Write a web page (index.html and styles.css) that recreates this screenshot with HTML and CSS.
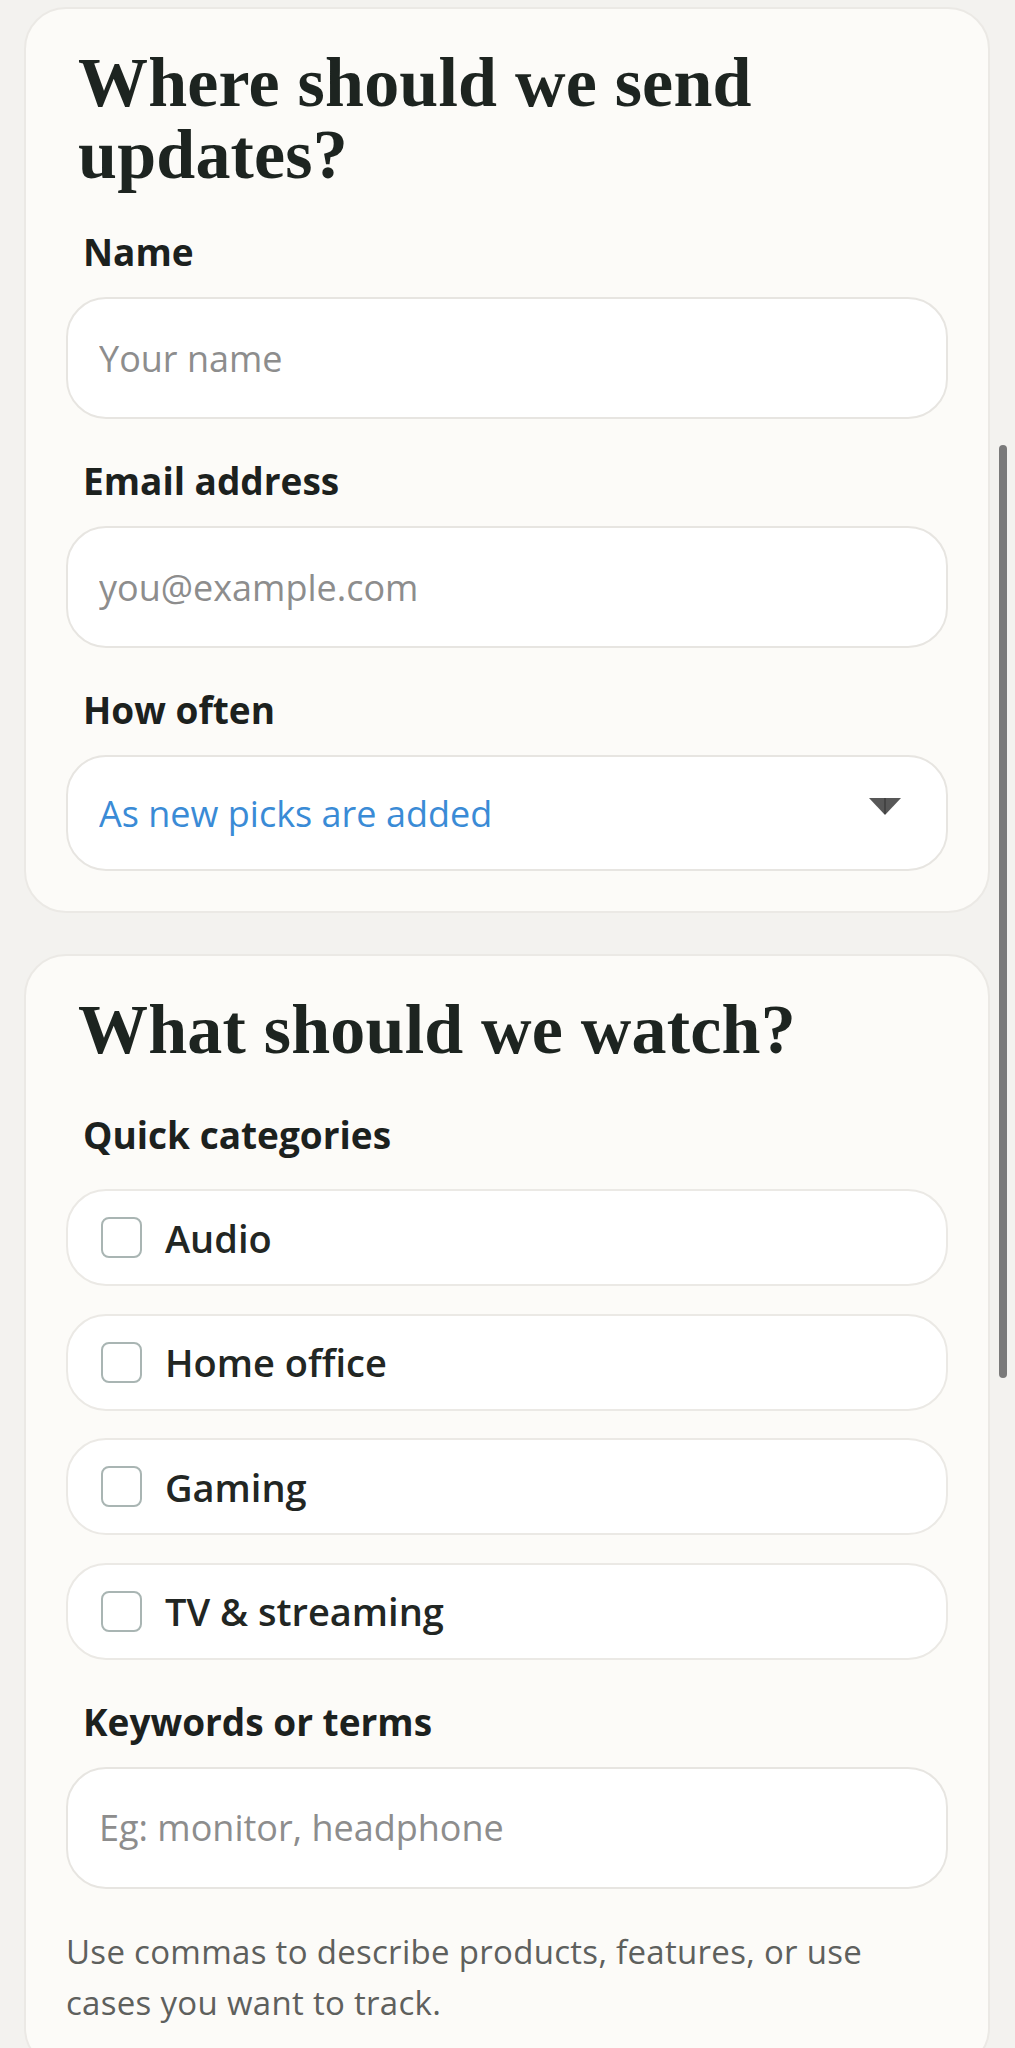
FILE: index.html
```html
<!DOCTYPE html>
<html lang="en">
<head>
<meta charset="utf-8">
<title>Alerts</title>
<link rel="stylesheet" href="styles.css">
</head>
<body>
<main class="page">
  <section class="card">
    <h2 class="card-title">Where should we send updates?</h2>
    <div class="field">
      <label class="field-label" for="name">Name</label>
      <input class="text-input" id="name" type="text" placeholder="Your name">
    </div>
    <div class="field">
      <label class="field-label" for="email">Email address</label>
      <input class="text-input" id="email" type="email" placeholder="you@example.com">
    </div>
    <div class="field">
      <label class="field-label" for="freq">How often</label>
      <div class="select-wrap">
        <select class="select" id="freq">
          <option>As new picks are added</option>
          <option>Daily digest</option>
          <option>Weekly digest</option>
        </select>
        <svg class="select-arrow" width="32" height="17" viewBox="0 0 32 17" aria-hidden="true">
          <polygon points="0,0 32,0 16,17" fill="#575757"/>
          <line x1="16" y1="0" x2="16" y2="16" stroke="#3c3c3c" stroke-width="1.5"/>
        </svg>
      </div>
    </div>
  </section>

  <section class="card">
    <h2 class="card-title card-title--watch">What should we watch?</h2>
    <div class="field field--categories">
      <span class="field-label">Quick categories</span>
      <div class="category-list">
        <label class="category"><input class="checkbox" type="checkbox"><span>Audio</span></label>
        <label class="category"><input class="checkbox" type="checkbox"><span>Home office</span></label>
        <label class="category"><input class="checkbox" type="checkbox"><span>Gaming</span></label>
        <label class="category"><input class="checkbox" type="checkbox"><span>TV &amp; streaming</span></label>
      </div>
    </div>
    <div class="field">
      <label class="field-label" for="keywords">Keywords or terms</label>
      <input class="text-input" id="keywords" type="text" placeholder="Eg: monitor, headphone">
    </div>
    <p class="hint">Use commas to describe products, features, or use cases you want to track.</p>
  </section>
</main>
<div class="scrollbar" aria-hidden="true"></div>
</body>
</html>
```

FILE: styles.css
```css
html {
  scrollbar-width: none;
}
html::-webkit-scrollbar {
  display: none;
}

* {
  box-sizing: border-box;
}

body {
  margin: 0;
  background: #f3f2ef;
  font-family: "Open Sans", "Noto Sans", sans-serif;
  color: #1c211e;
}

.page {
  padding: 7px 25px 40px 24px;
  display: flex;
  flex-direction: column;
  gap: 41px;
}

.card {
  background: #fcfbf8;
  border: 2px solid #ebe9e5;
  border-radius: 42px;
  padding: 38px 40px 40px;
  display: flex;
  flex-direction: column;
  gap: 36px;
}

.card-title {
  margin: 0 0 -1px;
  padding-left: 12px;
  font-family: "Liberation Serif", "Times New Roman", serif;
  font-weight: 700;
  font-size: 70px;
  line-height: 72px;
  color: #1d2420;
  letter-spacing: 0.2px;
}

.card-title--watch {
  margin-bottom: 7px;
}

.field {
  display: flex;
  flex-direction: column;
  gap: 19px;
}

.field--categories {
  gap: 28px;
}

.field-label {
  display: block;
  padding-left: 17px;
  font-weight: 700;
  font-size: 37px;
  line-height: 52px;
  color: #1c211e;
}

.text-input,
.select {
  display: block;
  width: 100%;
  height: 122px;
  margin: 0;
  padding: 0 31px;
  background: #ffffff;
  border: 2px solid #e7e5e1;
  border-radius: 40px;
  font-family: "Open Sans", "Noto Sans", sans-serif;
  font-size: 36px;
  color: #2a2a2a;
  outline: none;
}

.text-input::placeholder {
  color: #8d8d8d;
  opacity: 1;
}

.select-wrap {
  position: relative;
}

.select {
  height: 116px;
  -webkit-appearance: none;
  appearance: none;
  color: #3a8bd6;
}

.select-arrow {
  position: absolute;
  top: 43px;
  right: 47px;
  pointer-events: none;
}

.category-list {
  display: flex;
  flex-direction: column;
  gap: 27.5px;
}

.category {
  display: flex;
  align-items: center;
  gap: 23px;
  height: 97px;
  padding-left: 33px;
  background: #ffffff;
  border: 2px solid #ebe9e5;
  border-radius: 40px;
  font-weight: 600;
  font-size: 38px;
  color: #222623;
}

.checkbox {
  -webkit-appearance: none;
  appearance: none;
  width: 41px;
  height: 41px;
  margin: 0;
  flex: none;
  background: #ffffff;
  border: 2.5px solid #a9b5b3;
  border-radius: 8px;
}

.hint {
  margin: 1px 10px 0 0;
  font-size: 33px;
  line-height: 51px;
  letter-spacing: 0.3px;
  color: #5e605d;
}

.scrollbar {
  position: fixed;
  top: 445px;
  right: 8px;
  width: 8px;
  height: 933px;
  border-radius: 4px;
  background: #7a7a7a;
}
```
